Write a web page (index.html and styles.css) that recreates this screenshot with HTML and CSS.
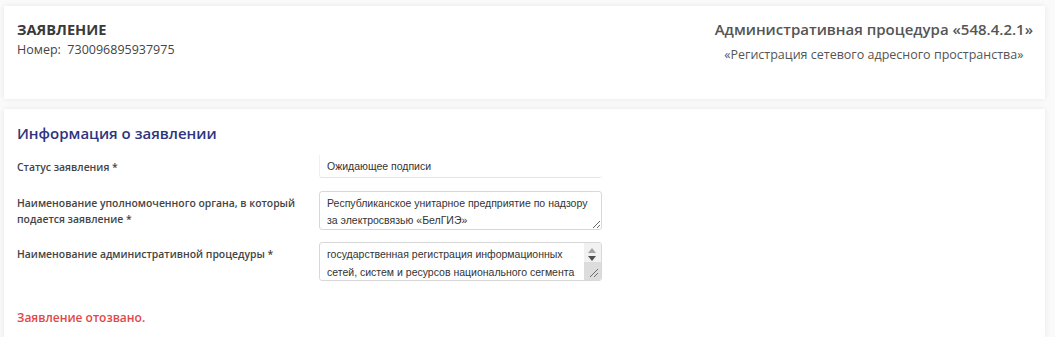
FILE: index.html
```html
<!DOCTYPE html>
<html>
  <head>
    <meta charset="utf-8">
    <title>Заявление</title>
    <link rel="stylesheet" href="styles.css">
  </head>
  <body>
    <div class="card header">
      <div class="header-left">
        <div class="doc-title">ЗАЯВЛЕНИЕ</div>
        <div class="doc-number">Номер:&nbsp; 730096895937975</div>
      </div>
      <div class="header-right">
        <div class="proc-title">Административная процедура «548.4.2.1»</div>
        <div class="proc-name">«Регистрация сетевого адресного пространства»</div>
      </div>
    </div>

    <div class="card info">
      <h2>Информация о заявлении</h2>

      <div class="row">
        <label>Статус заявления *</label>
        <div class="value plain">Ожидающее подписи</div>
      </div>

      <div class="row">
        <label>Наименование уполномоченного органа, в который подается заявление *</label>
        <textarea readonly>Республиканское унитарное предприятие по надзору за электросвязью «БелГИЭ»</textarea>
      </div>

      <div class="row">
        <label>Наименование административной процедуры *</label>
        <div class="scroll-box">
          <div class="scroll-text">государственная регистрация информационных сетей, систем и ресурсов национального сегмента</div>
          <div class="scrollbar">
            <span class="arrow up"></span>
            <span class="arrow down"></span>
            <span class="grip">
              <svg width="17" height="18" viewBox="0 0 17 18">
                <path d="M6 15 L14 7 M10 15 L14 11" stroke="#6e6e6e" stroke-width="1" fill="none" />
              </svg>
            </span>
          </div>
        </div>
      </div>

      <p class="revoked">Заявление отозвано.</p>
    </div>
  </body>
</html>
```

FILE: styles.css
```css
body {
  margin: 0;
  padding: 6px 10px 0 4px;
  background: #fafafa;
  font-family: "Open Sans", Arial, sans-serif;
  color: #333;
}
.card {
  background: white;
  box-shadow: 0 0 6px rgba(0, 0, 0, 0.08);
}
.header {
  display: flex;
  justify-content: space-between;
  height: 93px;
  padding: 13px 12px 0 13px;
  box-sizing: border-box;
}
.doc-title {
  font-size: 14.6px;
  font-weight: 700;
  color: #3a3a3a;
  line-height: 20px;
}
.doc-number {
  font-size: 12.5px;
  color: #444;
  margin-top: 2px;
  line-height: 18px;
}
.header-right {
  text-align: center;
}
.proc-title {
  font-size: 15px;
  font-weight: 600;
  color: #555;
  line-height: 20px;
}
.proc-name {
  font-size: 12.5px;
  color: #555;
  margin-top: 7px;
  line-height: 17px;
}
.info {
  margin-top: 10px;
  padding: 14px 13px 10px 13px;
  height: 230px;
  box-sizing: border-box;
}
h2 {
  margin: 0 0 12px;
  font-size: 15px;
  font-weight: 600;
  color: #2d3480;
  line-height: 20px;
}
.row {
  display: flex;
  margin-bottom: 13px;
}
.row:nth-child(3) {
  margin-bottom: 12px;
}
.row:nth-child(4) {
  margin-bottom: 0;
}
label {
  width: 302px;
  flex: none;
  font-size: 10.4px;
  font-weight: 600;
  color: #444;
  line-height: 16px;
  padding-top: 4px;
}
.value.plain {
  width: 283px;
  height: 23px;
  box-sizing: border-box;
  border-bottom: 1px solid #e4e4e4;
  border-left: 1px solid #f0f0f0;
  border-radius: 0 0 3px 3px;
  padding: 4px 7px;
  font-family: "Liberation Sans", Arial, sans-serif;
  font-size: 10.5px;
  line-height: 15px;
  color: #333;
}
textarea,
.scroll-box {
  width: 283px;
  height: 39px;
  box-sizing: border-box;
  border: 1px solid #d8d8d8;
  border-radius: 3px;
  padding: 3px 7px;
  font-family: "Liberation Sans", Arial, sans-serif;
  font-size: 10.5px;
  line-height: 17px;
  color: #333;
  resize: both;
  overflow: hidden;
}
.scroll-box {
  display: flex;
  padding: 0 0 0 7px;
  resize: none;
}
.scroll-text {
  flex: 1;
  padding-top: 2px;
  line-height: 18px;
}
.scrollbar {
  width: 17px;
  flex: none;
  position: relative;
  background: #f1f1f1;
}
.arrow {
  position: absolute;
  left: 4px;
  width: 0;
  height: 0;
  border-left: 4px solid transparent;
  border-right: 4px solid transparent;
}
.arrow.up {
  top: 5px;
  border-bottom: 5px solid #a3a3a3;
}
.arrow.down {
  top: 13px;
  border-top: 5px solid #505050;
}
.grip {
  position: absolute;
  left: 0;
  right: 0;
  bottom: 0;
  height: 18px;
  background: #dcdcdc;
}
.grip svg {
  display: block;
}
.revoked {
  margin: 28px 0 0;
  font-size: 12px;
  font-weight: 600;
  color: #e04848;
}
```
